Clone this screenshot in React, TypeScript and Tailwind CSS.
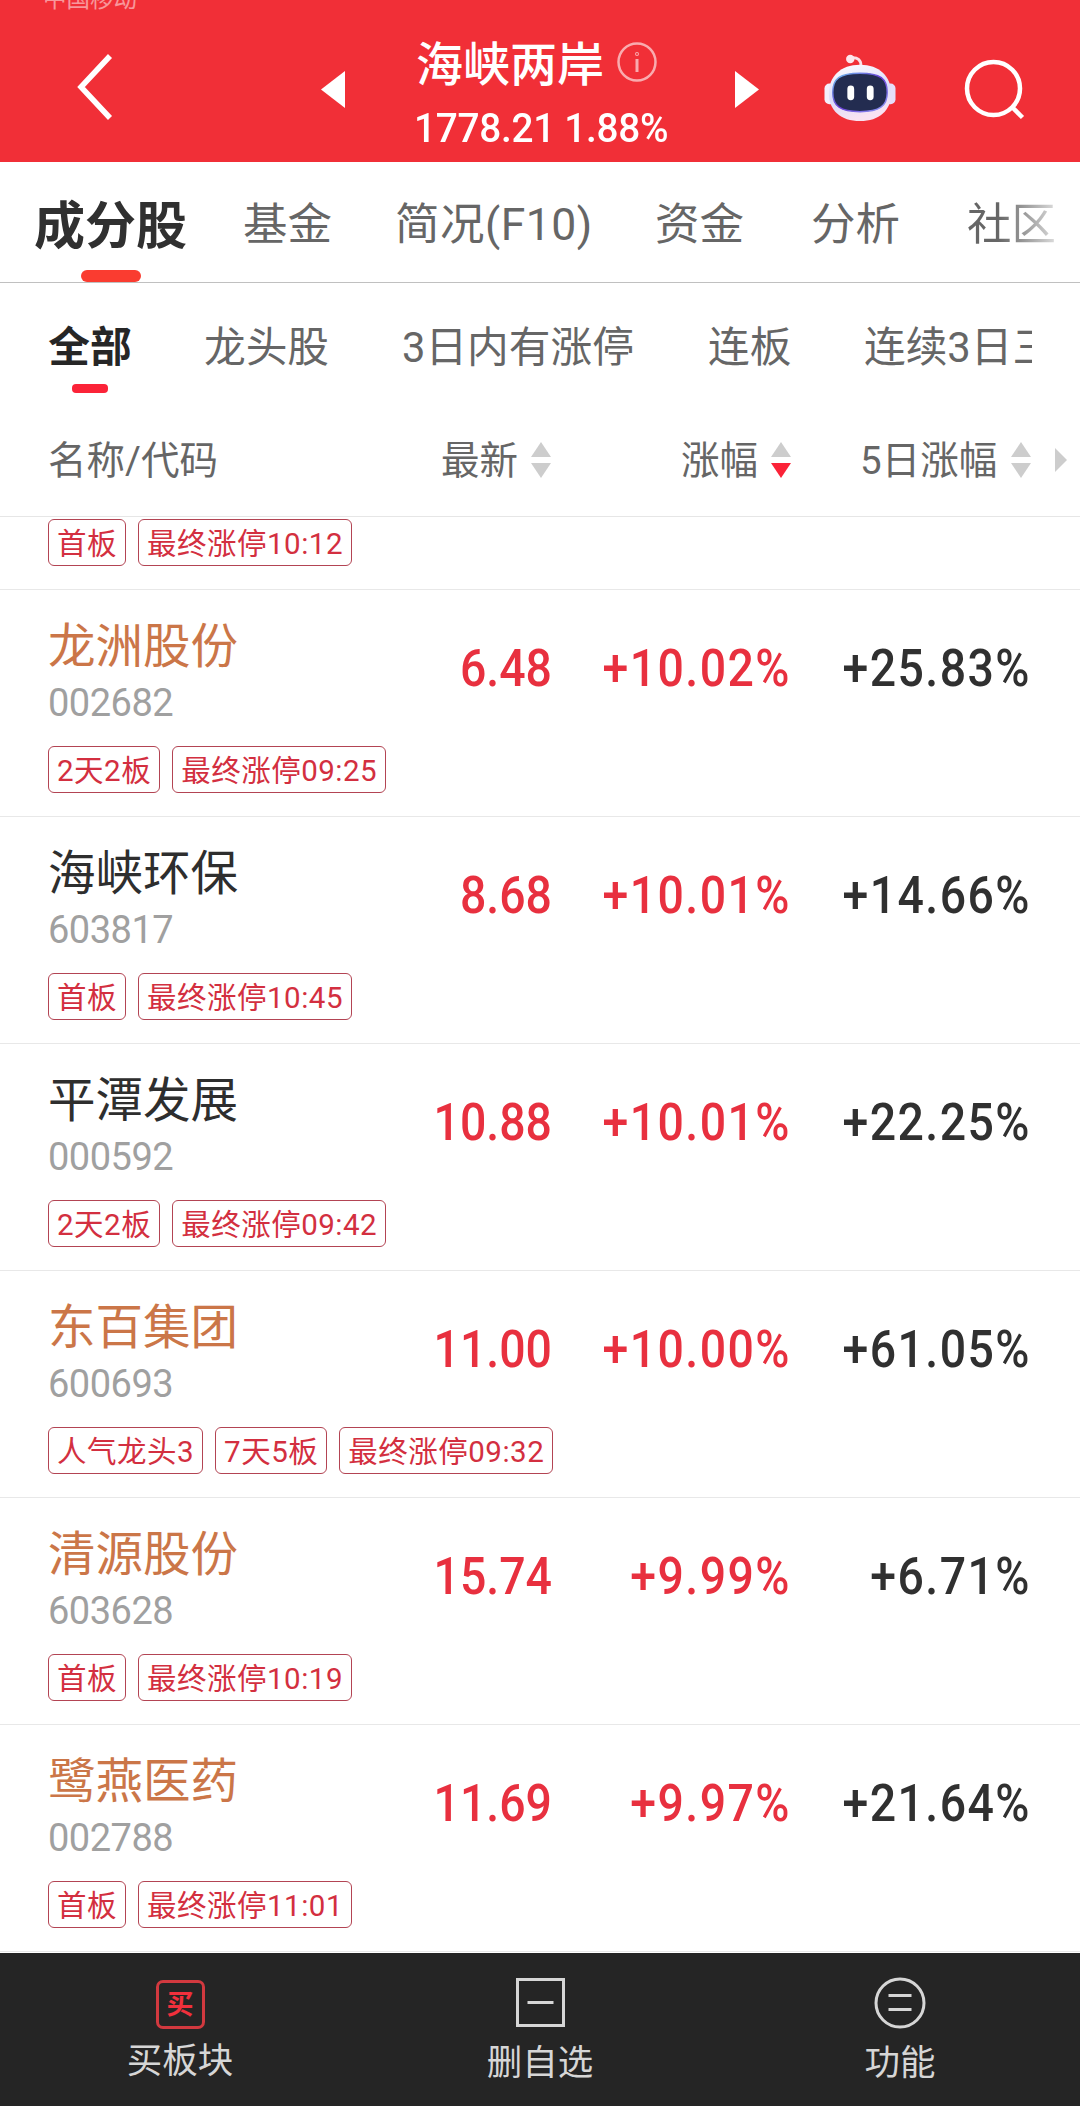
import clsx from "clsx";

type Stock = {
  name: string;
  code: string;
  price: string;
  change: string;
  change5d: string;
  tags: string[];
  highlight?: boolean;
};

const stocks: Stock[] = [
  { name: "龙洲股份", code: "002682", price: "6.48", change: "+10.02%", change5d: "+25.83%", tags: ["2天2板", "最终涨停09:25"], highlight: true },
  { name: "海峡环保", code: "603817", price: "8.68", change: "+10.01%", change5d: "+14.66%", tags: ["首板", "最终涨停10:45"] },
  { name: "平潭发展", code: "000592", price: "10.88", change: "+10.01%", change5d: "+22.25%", tags: ["2天2板", "最终涨停09:42"] },
  { name: "东百集团", code: "600693", price: "11.00", change: "+10.00%", change5d: "+61.05%", tags: ["人气龙头3", "7天5板", "最终涨停09:32"], highlight: true },
  { name: "清源股份", code: "603628", price: "15.74", change: "+9.99%", change5d: "+6.71%", tags: ["首板", "最终涨停10:19"], highlight: true },
  { name: "鹭燕医药", code: "002788", price: "11.69", change: "+9.97%", change5d: "+21.64%", tags: ["首板", "最终涨停11:01"], highlight: true },
];

function RobotIcon() {
  return (
    <svg width="72" height="67" viewBox="0 0 74 68" preserveAspectRatio="none">
      <defs>
        <linearGradient id="shell" x1="0" y1="0" x2="0.3" y2="1">
          <stop offset="0" stopColor="#ffffff" />
          <stop offset="0.6" stopColor="#dcdcfa" />
          <stop offset="1" stopColor="#f8e3f2" />
        </linearGradient>
        <linearGradient id="rim" x1="0" y1="0" x2="1" y2="1">
          <stop offset="0" stopColor="#6fc4ee" />
          <stop offset="0.5" stopColor="#6b3fd8" />
          <stop offset="1" stopColor="#8fa0f5" />
        </linearGradient>
      </defs>
      <path d="M28 4Q38 3 38 12" fill="none" stroke="#fbdfe6" strokeWidth="3" />
      <circle cx="27" cy="5" r="4.300" fill="#fde6ec" />
      <rect x="0.500" y="30" width="11" height="21" rx="5" fill="#f4effc" />
      <rect x="62.500" y="30" width="11" height="21" rx="5" fill="#e6defa" />
      <path d="M37 11C57 11 69 23 69 40C69 57 57 68 37 68C17 68 5 57 5 40C5 23 17 11 37 11Z" fill="url(#shell)" />
      <path d="M37 19.500C58 19.500 65 25 65 39C65 53 57 58.500 37 58.500C17 58.500 9 53 9 39C9 25 16 19.500 37 19.500Z" fill="#232c50" stroke="url(#rim)" strokeWidth="1.500" />
      <rect x="24" y="32" width="7" height="15" rx="3.500" fill="#fff" />
      <rect x="44" y="32" width="7" height="15" rx="3.500" fill="#fff" />
    </svg>
  );
}

function SortIcon({ desc = false }: { desc?: boolean }) {
  return (
    <svg width="20" height="36" viewBox="0 0 20 36" className="shrink-0">
      <path d="M10 0L20 15H0Z" fill="#cdcdcd" />
      <path d="M0 21H20L10 36Z" fill={desc ? "#fb2338" : "#cdcdcd"} />
    </svg>
  );
}

function Tags({ tags }: { tags: string[] }) {
  return (
    <div className="flex gap-3">
      {tags.map((tag) => (
        <span
          key={tag}
          className="flex h-[47px] items-center rounded-[6px] border border-[#b34453] px-2 pt-1 text-[29.500px] leading-none tracking-[0.500px] text-[#d32f40]"
        >
          {tag}
        </span>
      ))}
    </div>
  );
}

function Header() {
  return (
    <header className="h-[162px] overflow-hidden bg-[#f12f37] text-white">
      <div className="-mt-[15px] h-[28px] pl-[43px] text-[23.500px] leading-[28px] text-white/50">中国移动</div>
      <div className="flex">
        <svg width="36" height="66" viewBox="0 0 36 66" className="mt-[41px] ml-[77px]" fill="none" stroke="#fff" strokeWidth="5.500">
          <path d="M33 2L4 33L33 64" />
        </svg>
        <svg width="24" height="37" viewBox="0 0 24 37" className="mt-[58px] ml-[208px]">
          <path d="M24 0V37L0 18.500Z" fill="#fff" />
        </svg>
        <div className="mt-[25px] ml-[71px] w-[260px]">
          <div className="flex items-center text-[47px] leading-[54px] font-medium whitespace-nowrap">
            海峡两岸
            <svg width="40" height="40" viewBox="0 0 40 40" className="-mt-[6px] ml-[13px] shrink-0" fill="none" stroke="#fff" strokeOpacity="0.6">
              <circle cx="20" cy="20" r="18.500" strokeWidth="2.500" />
              <path d="M20 17V30" strokeWidth="3" />
              <circle cx="20" cy="12" r="0.500" strokeWidth="3" />
            </svg>
          </div>
          <div className="mt-[14px] -ml-[2px] origin-left scale-x-[0.945] text-[41px] leading-[44px] font-medium tracking-[-0.300px] whitespace-nowrap">
            1778.21 1.88%
          </div>
        </div>
        <svg width="24" height="37" viewBox="0 0 24 37" className="mt-[58px] ml-[59px]">
          <path d="M0 0V37L24 18.500Z" fill="#fff" />
        </svg>
        <div className="mt-[41px] ml-[65px]">
          <RobotIcon />
        </div>
        <svg width="62" height="62" viewBox="0 0 62 62" className="mt-[46px] ml-[68px]" fill="none" stroke="#fff" strokeWidth="4.500">
          <circle cx="29.500" cy="29.500" r="26.500" />
          <path d="M48 48L58.500 58.500" />
        </svg>
      </div>
    </header>
  );
}

function MainTabs() {
  return (
    <nav className="flex h-[121px] border-b border-[#c0c0c0] bg-white pl-[34px] text-[44.500px] whitespace-nowrap text-[#666]">
      <div className="flex w-[153px] flex-col items-center">
        <span className="mt-[30px] text-[51px] leading-[70px] font-bold text-[#303030]">成分股</span>
        <span className="mt-2 h-3 w-[60px] rounded-full bg-[#fa3c30]" />
      </div>
      <div className="flex pt-[30px] leading-[66px]">
        <span className="ml-[56px] w-[152px]">基金</span>
        <span className="w-[260px] tracking-[0.500px]">简况(F10)</span>
        <span className="w-[156px]">资金</span>
        <span className="w-[156px]">分析</span>
        <span className="h-[66px] bg-linear-to-r from-[#666] from-35% to-[#ddd] bg-clip-text text-transparent">社区</span>
      </div>
    </nav>
  );
}

function SubTabs() {
  return (
    <nav className="mr-12 flex h-[137px] overflow-hidden pt-[35px] pl-[48px] text-[41.700px] leading-[60px] whitespace-nowrap text-[#666]">
      <div className="flex w-[84px] shrink-0 flex-col items-center">
        <span className="font-bold text-[#262626]">全部</span>
        <span className="mt-[6px] h-[9px] w-9 rounded-[4px] bg-[#fb2338]" />
      </div>
      <span className="ml-[72px] w-[198px] shrink-0">龙头股</span>
      <span className="w-[306px] shrink-0">3日内有涨停</span>
      <span className="w-[156px] shrink-0">连板</span>
      <span className="shrink-0">连续3日三</span>
    </nav>
  );
}

function TableHead() {
  return (
    <div className="flex h-[97px] items-center border-b border-[#e6e6e6] pb-[16px] pl-[48px] text-[38.500px] leading-none text-[#666]">
      <span className="w-[393px] pt-[2px]">名称/代码</span>
      <div className="flex w-[110px] items-center justify-between">
        <span className="pt-[2px]">最新</span>
        <SortIcon />
      </div>
      <div className="ml-[130px] flex w-[110px] items-center justify-between">
        <span className="pt-[2px]">涨幅</span>
        <SortIcon desc />
      </div>
      <div className="ml-[69px] flex w-[171px] items-center justify-between">
        <span className="pt-[2px]">5日涨幅</span>
        <SortIcon />
      </div>
      <svg width="12" height="24" viewBox="0 0 12 24" className="ml-6">
        <path d="M0 0L12 12L0 24Z" fill="#cdcdcd" />
      </svg>
    </div>
  );
}

function StockRow({ stock }: { stock: Stock }) {
  return (
    <div className="h-[227px] border-b border-[#e8e8e8] pt-[29px] pl-[48px]">
      <div className="flex h-[127px]">
        <div className="w-[263px]">
          <div className={clsx("text-[47.500px] leading-[56px]", stock.highlight ? "text-[#cb7648]" : "text-[#2e2e2e]")}>
            {stock.name}
          </div>
          <div className="mt-[6px] text-[38px] leading-[44px] tracking-[-0.500px] text-[#a0a0a0]">{stock.code}</div>
        </div>
        <div className="flex pt-[20px] text-right text-[51px] leading-[60px] font-medium">
          <span className="w-[241px] origin-right scale-x-[0.910] text-[#e8303f]">{stock.price}</span>
          <span className="w-[239px] origin-right scale-x-[0.910] tracking-[1.600px] text-[#e8303f]">{stock.change}</span>
          <span className="w-[240px] origin-right scale-x-[0.910] tracking-[1.600px] text-[#303030]">{stock.change5d}</span>
        </div>
      </div>
      <Tags tags={stock.tags} />
    </div>
  );
}

function BottomBar() {
  return (
    <footer className="mt-px grid h-[153px] grid-cols-3 bg-[#252525] text-[35.500px] leading-[44px] text-[#d6d6d6]">
      <div className="flex flex-col items-center pt-[27px]">
        <div className="flex size-[49px] items-center justify-center rounded-[7px] border-[3px] border-[#d2393f] pt-[2px] text-[27px] leading-none font-bold text-[#f0303c]">
          买
        </div>
        <span className="mt-[10px]">买板块</span>
      </div>
      <div className="flex flex-col items-center pt-[25px]">
        <svg width="49" height="49" viewBox="0 0 49 49" fill="none" stroke="#d6d6d6" strokeWidth="3">
          <rect x="1.500" y="1.500" width="46" height="46" />
          <path d="M11.500 24.500H37.500" />
        </svg>
        <span className="mt-[14px]">删自选</span>
      </div>
      <div className="flex flex-col items-center pt-[24px]">
        <svg width="52" height="52" viewBox="0 0 52 52" fill="none" stroke="#d6d6d6" strokeWidth="3">
          <circle cx="26" cy="26" r="24" />
          <path d="M14.500 18.500H37.500M14.500 32.500H37.500" />
        </svg>
        <span className="mt-3">功能</span>
      </div>
    </footer>
  );
}

export default function App() {
  return (
    <div className="h-[2106px] w-[1080px] overflow-hidden bg-white font-['Roboto','Noto_Sans_CJK_SC',sans-serif]">
      <Header />
      <MainTabs />
      <SubTabs />
      <TableHead />
      {/* last line of the row scrolled under the table head */}
      <div className="h-[73px] border-b border-[#e8e8e8] pt-[2px] pl-[48px]">
        <Tags tags={["首板", "最终涨停10:12"]} />
      </div>
      {stocks.map((stock) => (
        <StockRow key={stock.code} stock={stock} />
      ))}
      <BottomBar />
    </div>
  );
}
